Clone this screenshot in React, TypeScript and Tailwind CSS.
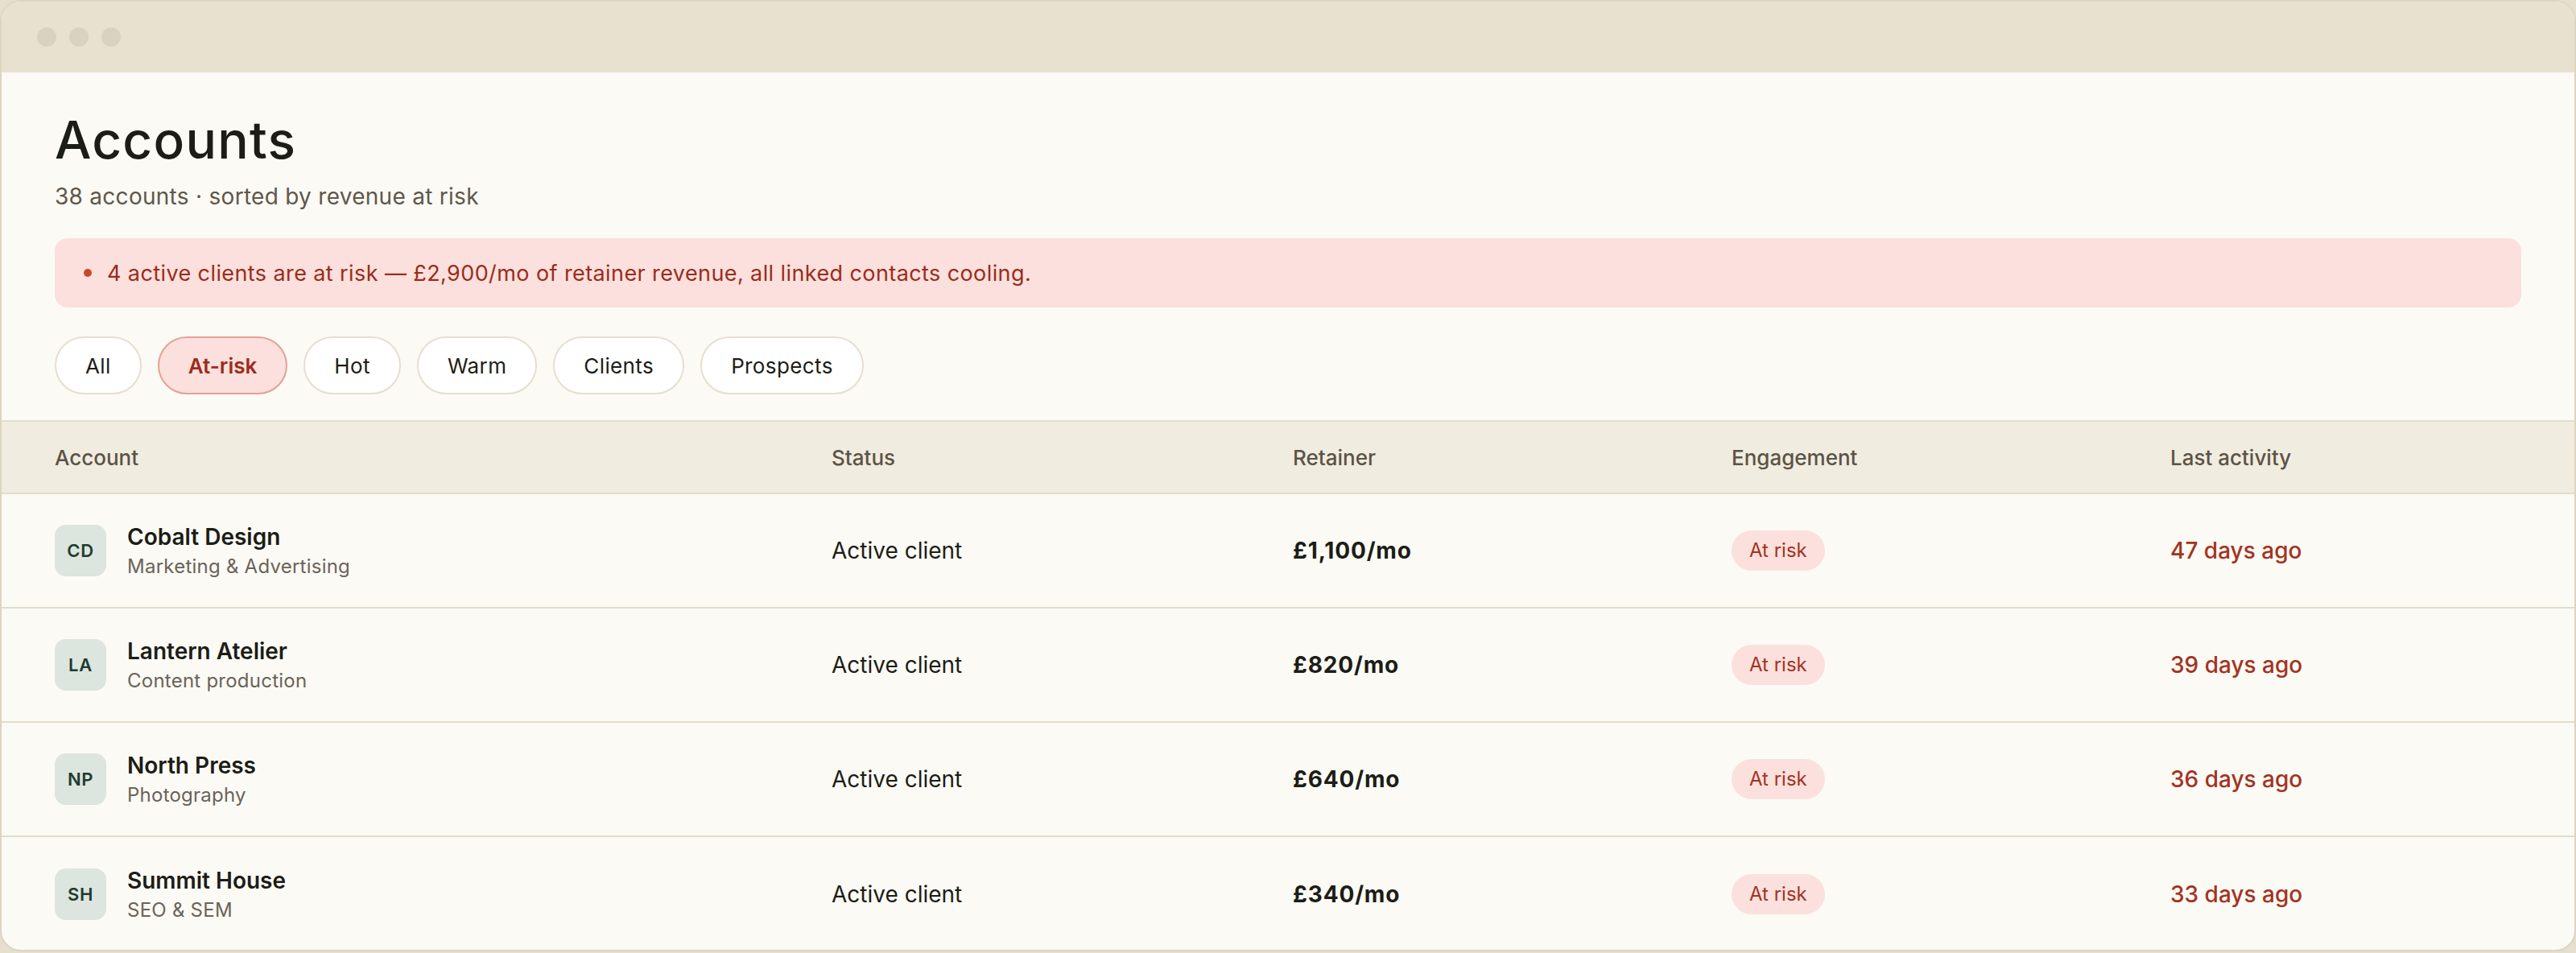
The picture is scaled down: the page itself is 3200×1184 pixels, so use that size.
import React from 'react';

type Account = {
    initials: string;
    name: string;
    sector: string;
    status: string;
    retainer: string;
    lastActivity: string;
};

const accounts: Account[] = [
    { initials: 'CD', name: 'Cobalt Design', sector: 'Marketing & Advertising', status: 'Active client', retainer: '£1,100/mo', lastActivity: '47 days ago' },
    { initials: 'LA', name: 'Lantern Atelier', sector: 'Content production', status: 'Active client', retainer: '£820/mo', lastActivity: '39 days ago' },
    { initials: 'NP', name: 'North Press', sector: 'Photography', status: 'Active client', retainer: '£640/mo', lastActivity: '36 days ago' },
    { initials: 'SH', name: 'Summit House', sector: 'SEO & SEM', status: 'Active client', retainer: '£340/mo', lastActivity: '33 days ago' },
];

const filters = ['All', 'At-risk', 'Hot', 'Warm', 'Clients', 'Prospects'];

const cols = 'grid grid-cols-[965px_573px_545px_545px_1fr] items-center px-[66px]';

const App = () => {
    return (
        <div className="min-h-screen bg-[#e6dfcd] font-[Inter,sans-serif] text-[#1c1d16]">
            <div className="h-[1182px] border-2 border-[#ddd5c2] rounded-[26px] overflow-hidden bg-[#fbfaf5] flex flex-col">
                {/* window chrome */}
                <div className="h-[88px] shrink-0 bg-[#e8e1cf] flex items-center gap-4 pl-[44px]">
                    <span className="w-6 h-6 rounded-full bg-[#d9d2c0]" />
                    <span className="w-6 h-6 rounded-full bg-[#d9d2c0]" />
                    <span className="w-6 h-6 rounded-full bg-[#d9d2c0]" />
                </div>

                <div className="px-[66px] pt-[47px]">
                    <h1 className="text-[64px] leading-[74px] font-medium tracking-[0.02em]">Accounts</h1>
                    <p className="mt-[13px] text-[28px] leading-[40px] tracking-[0.01em] text-[#5f574b]">38 accounts · sorted by revenue at risk</p>

                    <div className="mt-[32px] h-[86px] rounded-[16px] bg-[#fbe0dd] flex items-center gap-[19px] pl-[36px] text-[27px] tracking-[0.015em] text-[#9b2c1c]">
                        <span className="w-[10px] h-[10px] rounded-full bg-[#c8472e]" />
                        <span className="translate-y-[1px]">4 active clients are at risk — £2,900/mo of retainer revenue, all linked contacts cooling.</span>
                    </div>

                    <div className="mt-[36px] flex gap-[20px]">
                        {filters.map(f => (
                            <button
                                key={f}
                                className={
                                    f === 'At-risk'
                                        ? 'h-[72px] px-[36px] rounded-full border-2 border-[#e3a197] bg-[#fbe0dd] text-[26px] font-semibold text-[#9b2c1c]'
                                        : 'h-[72px] px-[36px] rounded-full border-2 border-[#e6dfcf] bg-white text-[26px] tracking-[0.015em] text-[#1c1d16]'
                                }
                            >
                                {f}
                            </button>
                        ))}
                    </div>
                </div>

                {/* table */}
                <div className="mt-[32px]">
                    <div className={`${cols} h-[92px] border-y-2 border-[#e4ddcc] bg-[#f1ece0] text-[26px] font-medium text-[#5b5346]`}>
                        <div>Account</div>
                        <div>Status</div>
                        <div>Retainer</div>
                        <div>Engagement</div>
                        <div>Last activity</div>
                    </div>
                    {accounts.map((a, i) => (
                        <div
                            key={a.initials}
                            className={`${cols} h-[142px] ${i < accounts.length - 1 ? 'border-b-2 border-[#e4ddcc]' : ''}`}
                        >
                            <div className="flex items-center gap-[26px]">
                                <div className="w-16 h-16 rounded-[14px] bg-[#dce5de] flex items-center justify-center text-[22px] font-semibold tracking-[0.03em] text-[#1f3b2f]">
                                    {a.initials}
                                </div>
                                <div className="flex flex-col">
                                    <span className="text-[28px] leading-[36px] font-semibold">{a.name}</span>
                                    <span className="mt-[3px] text-[24px] leading-[32px] tracking-[0.01em] text-[#6b6358]">{a.sector}</span>
                                </div>
                            </div>
                            <div className="text-[28px]">{a.status}</div>
                            <div className="text-[28px] font-bold tracking-[0.03em]">{a.retainer}</div>
                            <div>
                                <span className="inline-flex items-center h-[50px] px-[22px] rounded-full bg-[#fbe0dd] text-[24px] text-[#a33322]">
                                    At risk
                                </span>
                            </div>
                            <div className="text-[28px] font-medium text-[#a33322]">{a.lastActivity}</div>
                        </div>
                    ))}
                </div>
            </div>
        </div>
    );
};

export default App;
